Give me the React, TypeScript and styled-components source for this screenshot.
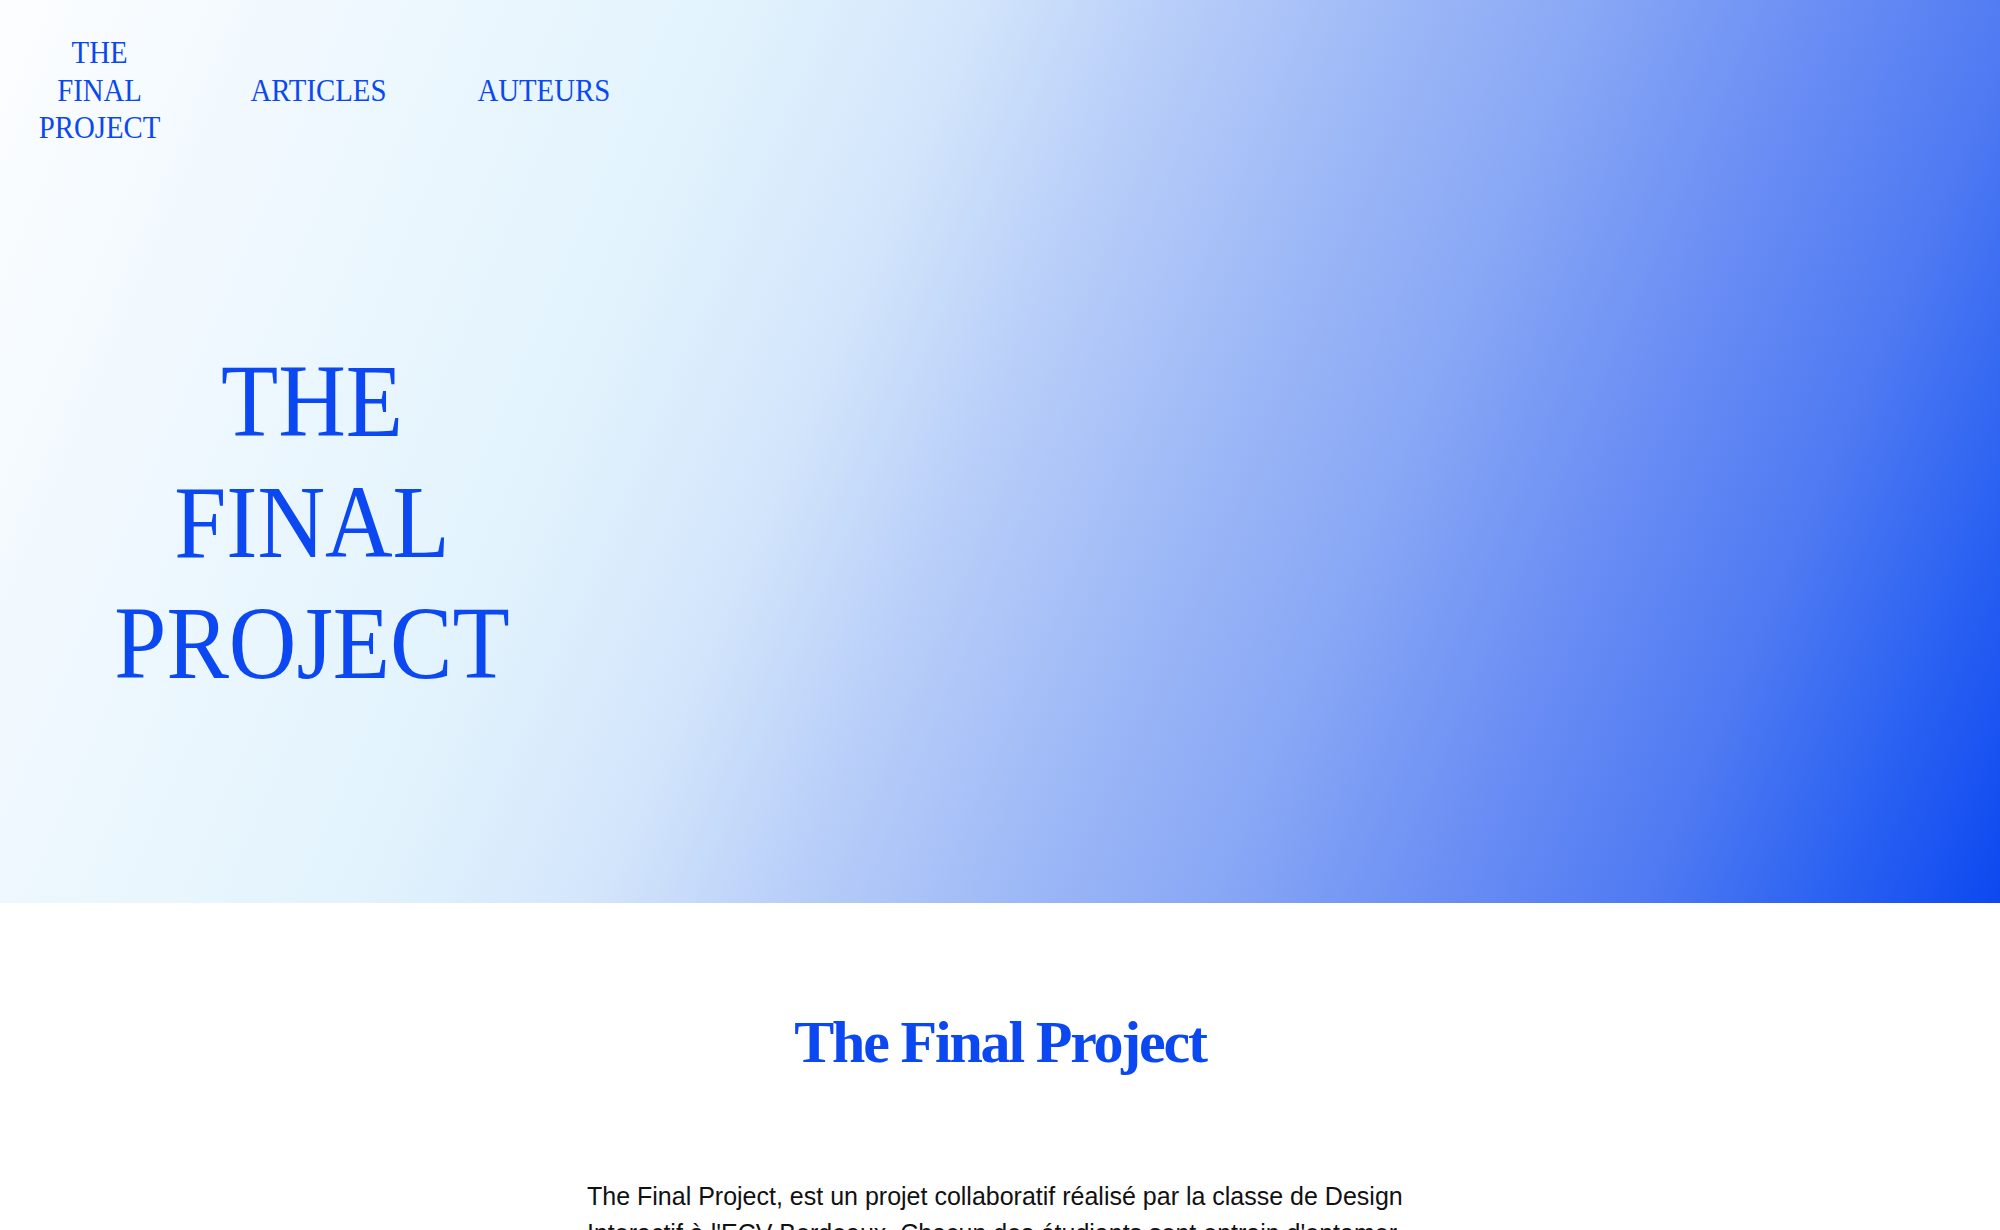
import React from "react";
import styled, { createGlobalStyle } from "styled-components";

const BLUE = "#0b48f1";

const GlobalStyle = createGlobalStyle`
  html, body {
    margin: 0;
    padding: 0;
    background: #ffffff;
  }
  body {
    font-family: "Liberation Sans", Arial, sans-serif;
    -webkit-font-smoothing: antialiased;
  }
  * { box-sizing: border-box; }
`;

const Hero = styled.header`
  height: 903px;
  display: flex;
  flex-direction: column;
  background: linear-gradient(
    113deg,
    #fcfdff 0%,
    #eff8fe 15%,
    #e2f3fd 31%,
    #d3e5fb 41%,
    #b9cff9 49%,
    #a2bcf7 57%,
    #88a7f5 67%,
    #6c8ff4 76%,
    #4f7af2 85%,
    #2e64f2 92%,
    #0c48f0 100%
  );
`;

const Nav = styled.nav`
  display: flex;
  align-items: center;
  gap: 76px;
  padding: 34px 0 0 32px;
  font-family: "Liberation Serif", "Times New Roman", serif;
  font-size: 32px;
  line-height: 37.5px;
  color: ${BLUE};
`;

const Logo = styled.a`
  display: flex;
  flex-direction: column;
  align-items: center;
  text-decoration: none;
  color: inherit;
  transform: scaleX(0.9);
  transform-origin: center;
`;

const NavLink = styled.a`
  text-decoration: none;
  color: inherit;
  transform: scaleX(0.9);
  transform-origin: center;
`;

const HeroBody = styled.div`
  display: grid;
  grid-template-columns: 624px 1fr;
  margin-top: 193px;
`;

const HeroTitle = styled.h1`
  margin: 0;
  display: flex;
  flex-direction: column;
  align-items: center;
  font-family: "Liberation Serif", "Times New Roman", serif;
  font-weight: 400;
  font-size: 104px;
  line-height: 121px;
  color: ${BLUE};
  transform: scaleX(0.9);
  transform-origin: center;
`;

const Intro = styled.section`
  display: flex;
  flex-direction: column;
  align-items: center;
  padding: 103px 0 80px;
`;

const SectionTitle = styled.h2`
  margin: 0;
  font-family: "Liberation Serif", "Times New Roman", serif;
  font-weight: 700;
  font-size: 60px;
  line-height: 72px;
  letter-spacing: -2.2px;
  color: ${BLUE};
`;

const Text = styled.div`
  width: 826px;
  margin-top: 100px;
  display: flex;
  flex-direction: column;
  gap: 37px;
`;

const Paragraph = styled.p`
  margin: 0;
  font-family: "Liberation Sans", Arial, sans-serif;
  font-size: 25px;
  line-height: 37px;
  color: #111111;
`;

export default function App() {
  return (
    <>
      <GlobalStyle />
      <Hero>
        <Nav>
          <Logo href="#">
            <span>THE</span>
            <span>FINAL</span>
            <span>PROJECT</span>
          </Logo>
          <NavLink href="#">ARTICLES</NavLink>
          <NavLink href="#">AUTEURS</NavLink>
        </Nav>
        <HeroBody>
          <HeroTitle>
            <span>THE</span>
            <span>FINAL</span>
            <span>PROJECT</span>
          </HeroTitle>
        </HeroBody>
      </Hero>
      <Intro>
        <SectionTitle>The Final Project</SectionTitle>
        <Text>
          <Paragraph>
            The Final Project, est un projet collaboratif réalisé par la classe de Design
            Interactif à l'ECV Bordeaux. Chacun des étudiants sont entrain d'entamer
            leur dernière année d'études et ont choisi de partager leurs réflexions sur
            le design, le numérique et leur futur métier à travers une série d'articles.
          </Paragraph>
          <Paragraph>
            Vous retrouverez ici l'ensemble des articles écrits par les étudiants, ainsi
            que la présentation de chacun des auteurs.
          </Paragraph>
        </Text>
      </Intro>
    </>
  );
}
